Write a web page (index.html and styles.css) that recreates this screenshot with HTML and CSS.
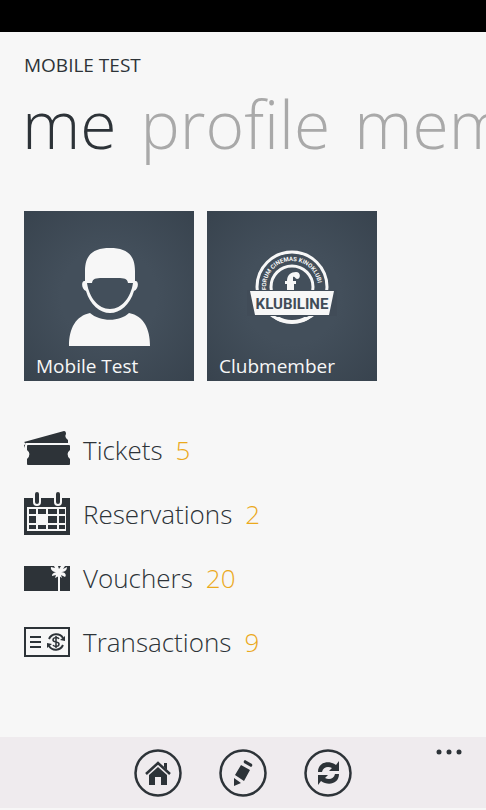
FILE: index.html
```html
<!DOCTYPE html>
<html lang="en">
<head>
<meta charset="utf-8">
<meta name="viewport" content="width=device-width, initial-scale=1">
<title>Mobile Test</title>
<link rel="stylesheet" href="styles.css">
</head>
<body>
<div class="status"></div>
<main class="page">
  <h1 class="title">MOBILE TEST</h1>
  <nav class="tabs">
    <a class="tab tab-active" href="#me">me</a>
    <a class="tab" href="#profile">profile</a>
    <a class="tab" href="#membership">mem</a>
  </nav>
  <section class="tiles">
    <a class="tile" href="#user">
      <svg class="tile-art" viewBox="0 0 170 170" aria-hidden="true">
        <path fill="#f7f7f7" fill-rule="evenodd" d="M61 70C57 69 57 78 62 80C66 94 76 102 86 102C96 102 106 94 110 80C115 78 115 69 111 70V60C111 44 103 37 86 37C69 37 61 44 61 60ZM68 72C69 66 74 67 86 67C98 67 103 66 104 72H109C107 86 98 98 86 98C74 98 65 86 63 72Z"/>
        <path fill="#f7f7f7" d="M45 135 C45 117 52 105 66 102 C76 111 96 111 105 102 C120 105 126 118 126 135 Z"/>
      </svg>
      <span class="tile-label">Mobile Test</span>
    </a>
    <a class="tile" href="#club">
      <svg class="tile-art" viewBox="0 0 170 170" aria-hidden="true">
        <defs><path id="arc" d="M59 79V76A26 26 0 0 1 111 76V84"/></defs>
        <circle cx="85" cy="76" r="35" fill="none" stroke="#f7f7f7" stroke-width="3"/>
        <circle cx="85" cy="76" r="21" fill="none" stroke="#f7f7f7" stroke-width="3"/>
        <path fill="#414c58" d="M40 79H130V105H40Z"/>
        <path fill="#f7f7f7" d="M43 80H127L122 104H48Z M65 106H105Q97 113 85 113Q73 113 65 106Z"/>
        <path fill="#414c58" d="M71 105H99Q93 109 85 109Q77 109 71 105Z"/>
        <path fill="#f7f7f7" d="M80 79V73H78V70H80C80 64 84 61 89 61C94 61 94 68 90 68C88 68 88 65 86 66V70H89V73H87V79Z"/>
        <text class="logo-ring"><textPath href="#arc">FORUM CINEMAS KINOKLUBI</textPath></text>
        <text class="logo-name" x="85" y="98">KLUBILINE</text>
      </svg>
      <span class="tile-label">Clubmember</span>
    </a>
  </section>
  <ul class="menu">
    <li><a class="item" href="#tickets">
      <svg class="icon" viewBox="0 0 48 48" aria-hidden="true">
        <path fill="#2d3338" d="M1 16 L41 5 Q43 5 43 8 Q41 11 45 14 L45 17 H2 V22 L1 19 Q4 18 1 16Z"/>
        <path fill="#2d3338" d="M5 19H46Q47 19 47 20V24Q42 28 47 33V38Q47 39 46 39H5Q4 39 4 38V33Q9 28 4 24V20Q4 19 5 19Z"/>
      </svg>
      <span>Tickets</span><span class="count">5</span></a></li>
    <li><a class="item" href="#reservations">
      <svg class="icon" viewBox="0 0 48 48" aria-hidden="true">
        <path fill="#2d3338" d="M1 8H47V45H1Z"/>
        <path stroke="#f7f7f7" stroke-width="8" stroke-linecap="round" d="M14 5V12M35 5V12"/>
        <path fill="#f7f7f7" d="M4 17H43V41H4Z"/>
        <path stroke="#2d3338" stroke-width="4" stroke-linecap="round" d="M14 4V12M35 4V12"/>
        <path fill="#2d3338" d="M6 19H13V24H6ZM15 19H23V24H15ZM25 19H34V24H25ZM36 19H42V24H36ZM6 26H13V33H6ZM25 26H34V33H25ZM36 26H42V33H36ZM6 35H13V39H6ZM15 35H23V39H15ZM25 35H34V39H25ZM36 35H42V39H36Z"/>
      </svg>
      <span>Reservations</span><span class="count">2</span></a></li>
    <li><a class="item" href="#vouchers">
      <svg class="icon" viewBox="0 0 48 48" aria-hidden="true">
        <path fill="#2d3338" d="M1 12H47V37H1Z"/>
        <path stroke="#f7f7f7" stroke-width="2" d="M36 18V37"/>
        <path fill="#f7f7f7" d="M35 18C31 19 27 16 28 13L32 14L31 12H35L36 15L38 12H42L40 15L44 13C44 17 41 18 38 18C42 18 44 21 42 23L38 21L39 24L36 22L32 24L33 21L29 22C29 19 32 18 35 18Z"/>
      </svg>
      <span>Vouchers</span><span class="count">20</span></a></li>
    <li><a class="item" href="#transactions">
      <svg class="icon" viewBox="0 0 48 48" aria-hidden="true">
        <g fill="none" stroke="#2d3338" stroke-width="2">
          <path d="M2 10H46V38H2Z"/>
          <path d="M7 19H18M7 24H18M7 29H18"/>
          <path d="M26 21A8 8 0 0 1 40 20M40 27A8 8 0 0 1 26 28"/>
          <path stroke-width="1.500" d="M36 21C35 19 30 19 30 22C30 25 36 23 36 26C36 29 31 29 30 27M33 18V30"/>
        </g>
        <path fill="#2d3338" d="M42 18V23L37 22ZM24 30V25L29 26Z"/>
      </svg>
      <span>Transactions</span><span class="count">9</span></a></li>
  </ul>
</main>
<footer class="appbar">
  <button class="round" aria-label="Home"><svg viewBox="0 0 48 48" aria-hidden="true">
    <circle cx="24" cy="24" r="22.500" fill="none" stroke="#2d3338" stroke-width="2.500"/>
    <path fill="none" stroke="#2d3338" stroke-width="2.500" d="M12 25L24 14L36 25"/>
    <path fill="#2d3338" d="M30 14H33V21L30 18ZM24 18L33 26V36H27V28H21V36H15V26Z"/></svg></button>
  <button class="round" aria-label="Edit"><svg viewBox="0 0 48 48" aria-hidden="true">
    <circle cx="24" cy="24" r="22.500" fill="none" stroke="#2d3338" stroke-width="2.500"/>
    <path fill="#2d3338" d="M26 11L33 15Q34 17 32 18L25 14Q24 12 26 11ZM22 16L31 21L25 32L16 26ZM15 29L22 34L15 37Z"/></svg></button>
  <button class="round" aria-label="Refresh"><svg viewBox="0 0 48 48" aria-hidden="true">
    <circle cx="24" cy="24" r="22.500" fill="none" stroke="#2d3338" stroke-width="2.500"/>
    <path fill="#2d3338" d="M14 23C14 13 25 11 32 16L35 12V22H25L28 19C24 17 19 18 18 23Z"/>
    <path fill="#2d3338" d="M35 25C35 35 24 37 17 32L14 36V26H24L21 29C25 31 30 30 31 25Z"/></svg></button>
  <button class="more" aria-label="More"><svg viewBox="0 0 28 6" aria-hidden="true"><g fill="#2d3338"><circle cx="4" cy="3" r="2.500"/><circle cx="14" cy="3" r="2.500"/><circle cx="24" cy="3" r="2.500"/></g></svg></button>
</footer>
</body>
</html>
```
FILE: styles.css
```css
* { box-sizing: border-box; }
body {
  margin: 0;
  min-height: 100vh;
  display: flex;
  flex-direction: column;
  background: #f7f7f7;
  color: #2d3338;
  font-family: "Open Sans", "Noto Sans", sans-serif;
  overflow-x: hidden;
}
a { color: inherit; text-decoration: none; }
.status { height: 32px; background: #000; }
.page { flex: 1; padding: 20px 0 0 24px; overflow: hidden; }
.title { margin: 0; font-size: 19px; line-height: 26px; font-weight: 400; }
.tabs {
  display: flex;
  gap: 24px;
  margin-top: 1px;
  margin-left: -2px;
  font-size: 66px;
  line-height: 88px;
  font-weight: 300;
  white-space: nowrap;
}
.tab { color: #a9a9a9; }
.tab-active { color: #2d3338; }
.tiles { display: flex; gap: 13px; margin-top: 44px; }
.tile {
  display: grid;
  width: 170px;
  height: 170px;
  background: radial-gradient(circle, #434f5b 40%, #38434e 100%);
  color: #f7f7f7;
}
.tile-art, .tile-label { grid-area: 1 / 1; }
.tile-art { width: 100%; height: 100%; }
.tile-label { align-self: end; padding: 0 12px 2px; font-size: 19px; line-height: 26px; }
.logo-ring { font: 700 6px Roboto, sans-serif; fill: #f7f7f7; }
.logo-name { font: 700 15px Roboto, sans-serif; fill: #414c58; text-anchor: middle; }
.menu { list-style: none; margin: 37px 0 0; padding: 0; }
.item {
  display: flex;
  align-items: center;
  height: 64px;
  font-size: 26px;
  font-weight: 300;
}
.icon { width: 48px; height: 48px; margin-left: -1px; margin-right: 12px; }
.count { margin-left: 13px; color: #eba91c; }
.appbar {
  display: grid;
  grid-template-columns: 1fr auto auto auto 1fr;
  column-gap: 37px;
  height: 73px;
  padding-top: 12px;
  background: #efebee;
  border-bottom: 2px solid #f7f7f7;
}
button { padding: 0; border: 0; background: none; }
.round { width: 48px; height: 48px; }
.round:first-child { grid-column: 2; }
.round svg, .more svg { display: block; width: 100%; }
.more { width: 28px; justify-self: end; align-self: start; margin-right: 23px; }
```
